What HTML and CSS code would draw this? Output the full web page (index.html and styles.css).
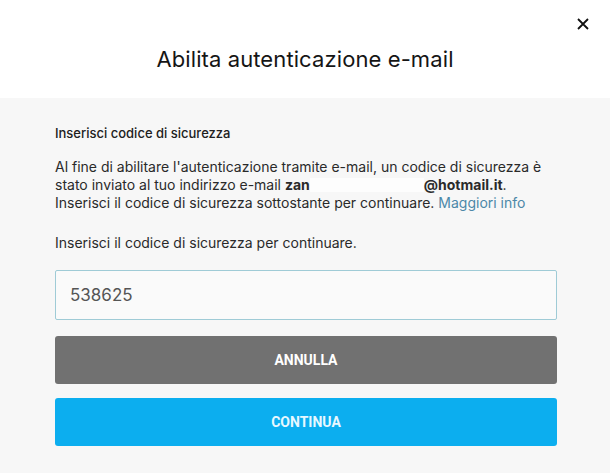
FILE: index.html
```html
<!DOCTYPE html>
<html lang="it">
<head>
  <meta charset="UTF-8">
  <meta name="viewport" content="width=device-width, initial-scale=1.0">
  <title>Abilita autenticazione e-mail</title>
  <link rel="stylesheet" href="styles.css">
</head>
<body>
  <div class="modal">
    <header class="modal-header">
      <button class="close-button" aria-label="Chiudi">
        <svg width="12" height="12" viewBox="0 0 12 12">
          <path d="M1 1 L11 11 M11 1 L1 11" stroke="#111" stroke-width="1.8" fill="none"/>
        </svg>
      </button>
      <h1>Abilita autenticazione e-mail</h1>
    </header>

    <div class="modal-body">
      <h2>Inserisci codice di sicurezza</h2>
      <p class="info">
        Al fine di abilitare l'autenticazione tramite e-mail, un codice di sicurezza è<br>
        stato inviato al tuo indirizzo e-mail <b>zan</b><span class="redacted"></span><b>@hotmail.it</b>.<br>
        Inserisci il codice di sicurezza sottostante per continuare. <a href="#">Maggiori info</a>
      </p>

      <label for="code">Inserisci il codice di sicurezza per continuare.</label>
      <input type="text" id="code" value="538625">

      <button class="btn btn-cancel">ANNULLA</button>
      <button class="btn btn-continue">CONTINUA</button>
    </div>
  </div>
</body>
</html>
```

FILE: styles.css
```css
body {
  font-family: Inter, 'Open Sans', sans-serif;
  margin: 0;
  padding: 0;
  background-color: #f7f7f7;
  color: #202020;
}

.modal-header {
  position: relative;
  height: 98px;
  background-color: #fff;
  display: flex;
  align-items: center;
  justify-content: center;
}

.modal-header h1 {
  margin: 19px 0 0;
  font-size: 22px;
  font-weight: 400;
  letter-spacing: 0.1px;
  color: #151515;
}

.close-button {
  position: absolute;
  top: 13px;
  right: 16px;
  width: 22px;
  height: 22px;
  padding: 5px;
  border: none;
  background: none;
  cursor: pointer;
}

.modal-body {
  padding: 27px 53px 0 55px;
}

h2 {
  margin: 0 0 17px;
  font-size: 13px;
  font-weight: 500;
  color: #202020;
}

.info {
  margin: 0 0 22px;
  font-size: 14px;
  line-height: 18px;
  color: #2a2a2a;
  white-space: nowrap;
}

.info b {
  font-weight: 700;
}

.redacted {
  display: inline-block;
  width: 114px;
  height: 14px;
  vertical-align: -2px;
  background-color: #fdfdfd;
}

.info a {
  color: #4c88a8;
  text-decoration: none;
}

label {
  display: block;
  font-size: 14px;
  color: #2a2a2a;
  margin-bottom: 19px;
}

input[type="text"] {
  display: block;
  box-sizing: border-box;
  width: 100%;
  height: 50px;
  padding: 0 14px;
  border: 1px solid #9fcbd6;
  border-radius: 2px;
  background-color: #fafafa;
  font-family: inherit;
  font-size: 17px;
  color: #555;
  margin-bottom: 16px;
}

.btn {
  display: block;
  width: 100%;
  height: 48px;
  border: none;
  border-radius: 3px;
  font-family: Roboto, sans-serif;
  font-size: 14px;
  font-weight: 700;
  color: #fff;
  cursor: pointer;
}

.btn-cancel {
  background-color: #717171;
  margin-bottom: 14px;
}

.btn-continue {
  background-color: #0caeef;
  color: #e8f8ff;
}
```
